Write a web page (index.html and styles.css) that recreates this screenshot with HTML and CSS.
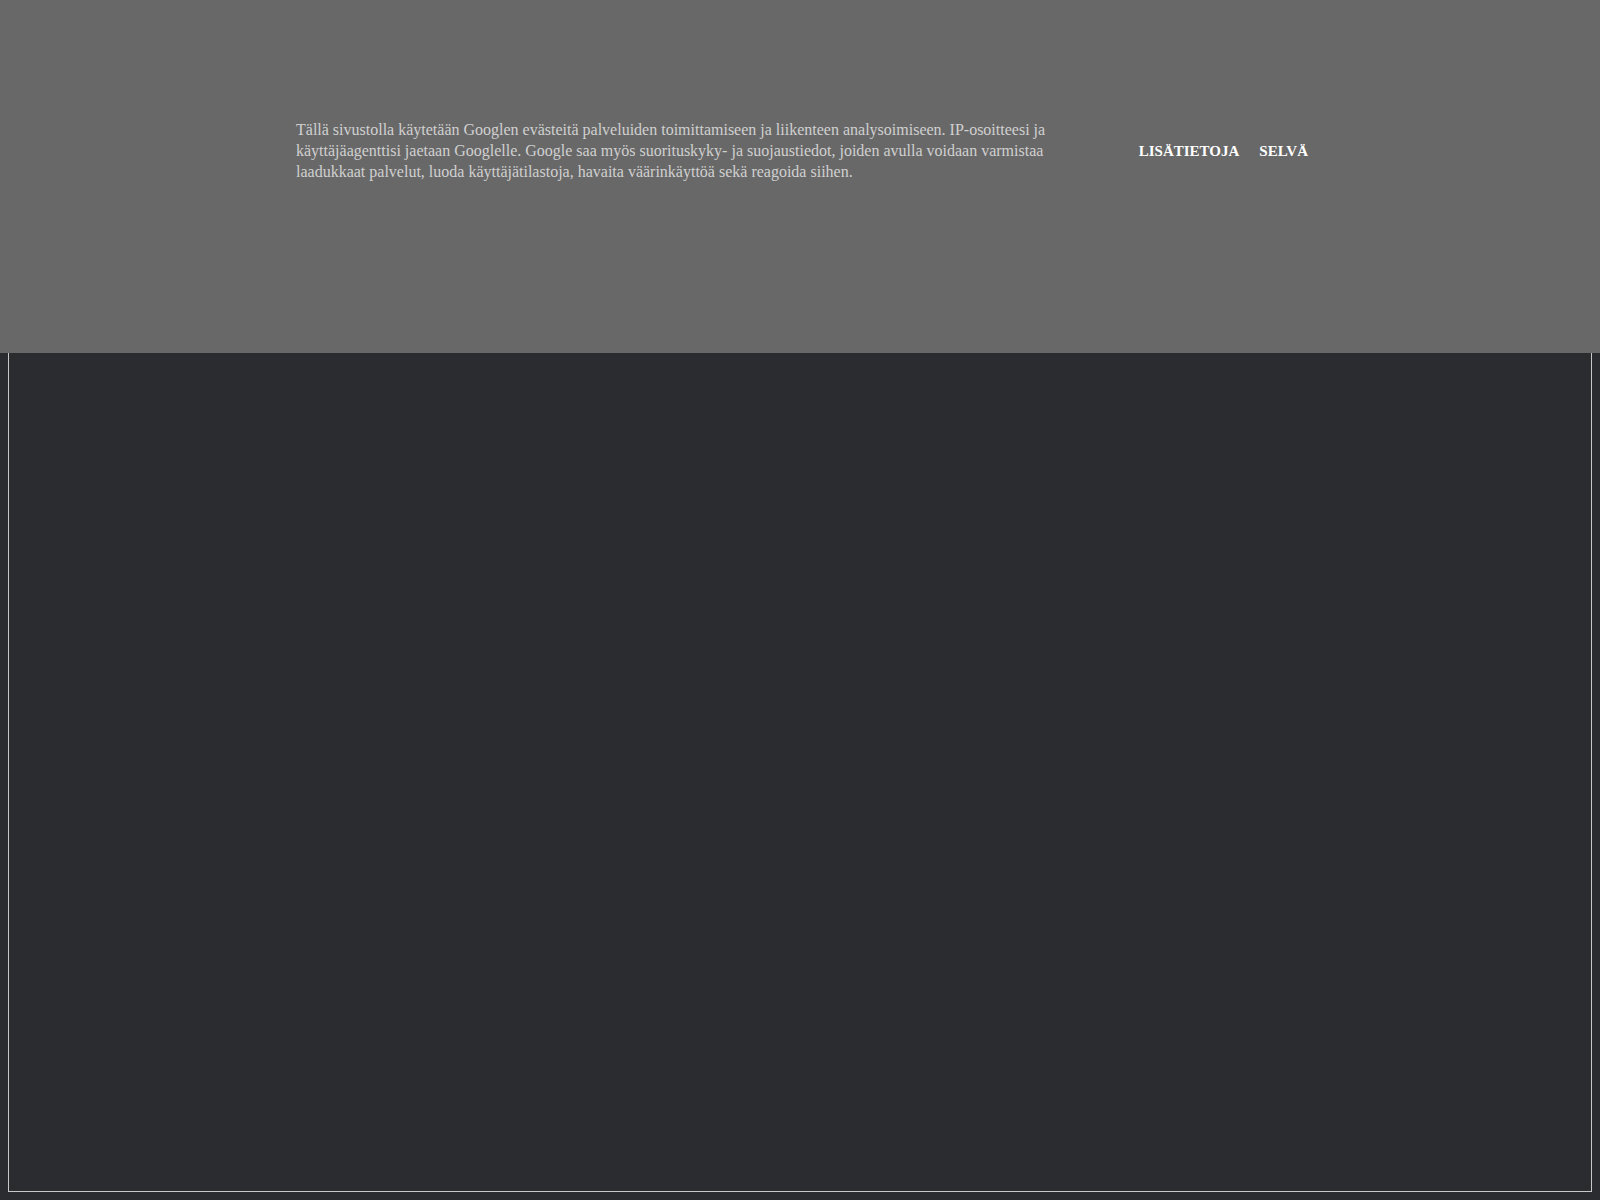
FILE: index.html
```html
<!DOCTYPE html>
<html lang="fi">
<head>
    <meta charset="UTF-8">
    <title>Blogi</title>
    <link rel="stylesheet" href="styles.css">
</head>
<body>
    <div class="page"></div>

    <!-- cookie notice -->
    <div class="cookie-info">
        <div class="cookie-inner">
            <p class="cookie-text">Tällä sivustolla käytetään Googlen evästeitä palveluiden toimittamiseen ja liikenteen analysoimiseen. IP-osoitteesi ja käyttäjäagenttisi jaetaan Googlelle. Google saa myös suorituskyky- ja suojaustiedot, joiden avulla voidaan varmistaa laadukkaat palvelut, luoda käyttäjätilastoja, havaita väärinkäyttöä sekä reagoida siihen.</p>
            <div class="cookie-buttons">
                <a class="cookie-button" href="#">Lisätietoja</a>
                <a class="cookie-button" href="#">Selvä</a>
            </div>
        </div>
    </div>
</body>
</html>
```

FILE: styles.css
```css
body {
    margin: 8px;
    background-color: #2b2c30;
    font-family: "Liberation Serif", "Times New Roman", serif;
}

.page {
    height: 1184px;
    box-sizing: border-box;
    border: 1px solid #c9c9c9;
}

.cookie-info {
    position: fixed;
    top: 0;
    left: 0;
    right: 0;
    height: 353px;
    background-color: #686868;
    box-sizing: border-box;
    padding-top: 119px;
    padding-left: 4px;
}

.cookie-inner {
    width: 1012px;
    margin: 0 auto;
    display: flex;
    align-items: center;
    justify-content: space-between;
}

.cookie-text {
    margin: 0;
    width: 752px;
    font-size: 16px;
    line-height: 21px;
    color: #d0d0d0;
}

.cookie-buttons {
    display: flex;
    gap: 20px;
    padding-top: 2px;
}

.cookie-button {
    color: #fff;
    font-weight: bold;
    font-size: 15px;
    text-transform: uppercase;
    text-decoration: none;
}
```
